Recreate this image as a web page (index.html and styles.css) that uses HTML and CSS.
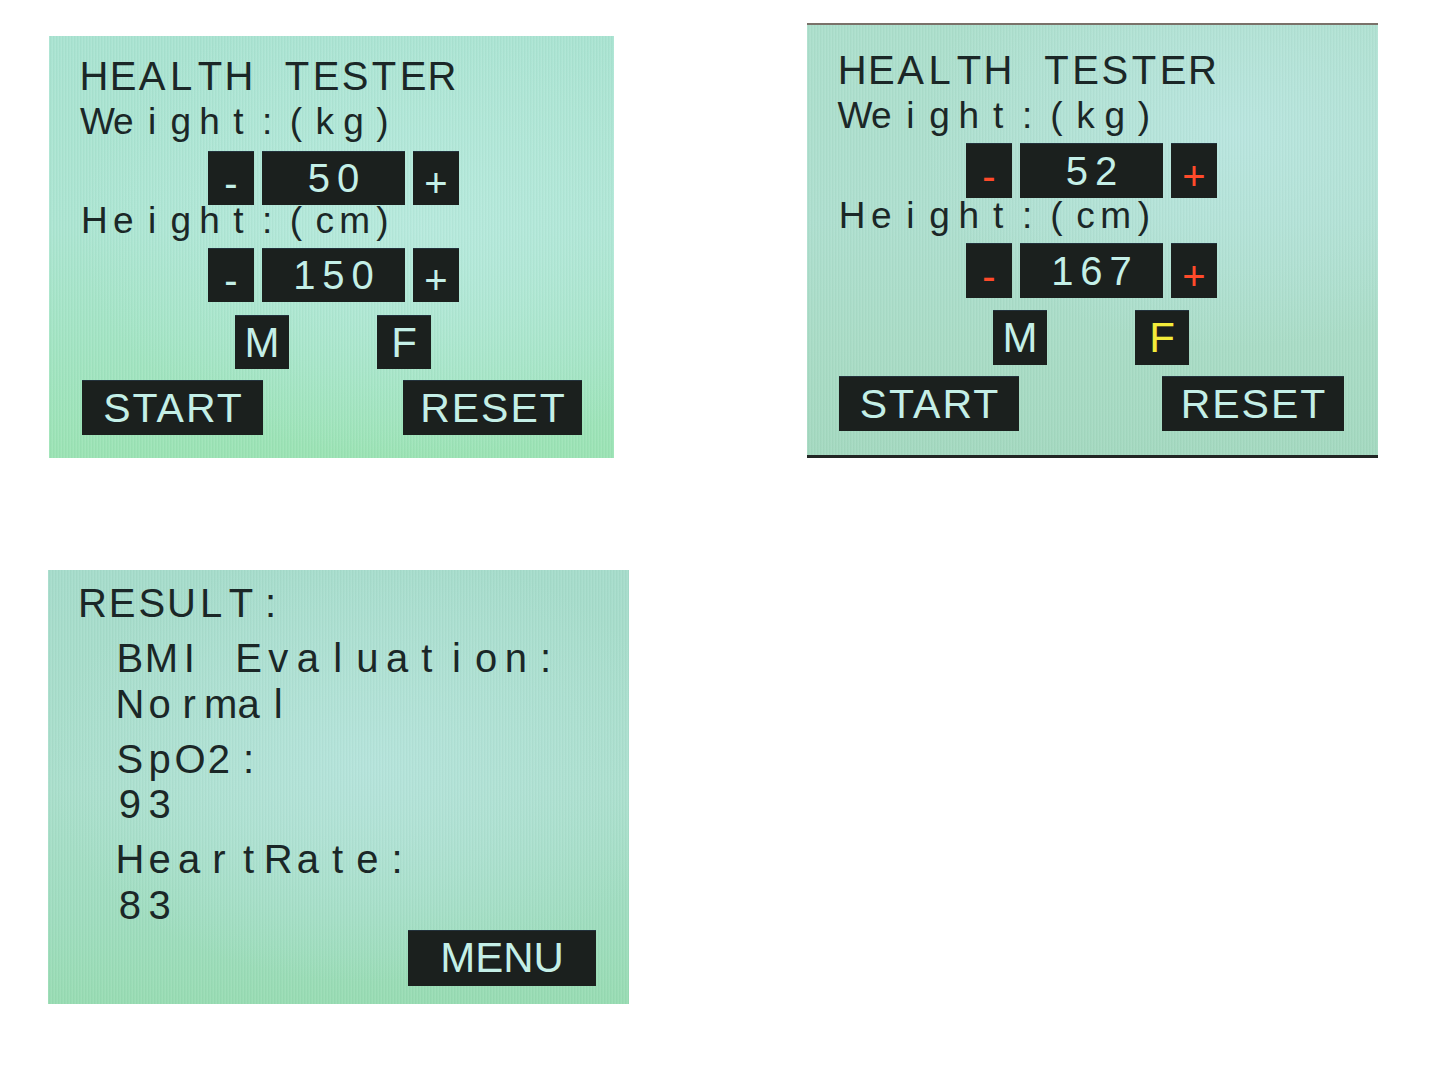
FILE: index.html
```html
<!DOCTYPE html>
<html lang="en">
<head>
<meta charset="utf-8">
<title>Health Tester</title>
<link rel="stylesheet" href="styles.css">
</head>
<body>
<div class="page">
  <div class="top-row">
    <section class="screen s1">
      <div class="line title"><span>H</span><span>E</span><span>A</span><span>L</span><span>T</span><span>H</span><span>&nbsp;</span><span>T</span><span>E</span><span>S</span><span>T</span><span>E</span><span>R</span></div>
      <div class="line label weight"><span>W</span><span>e</span><span>i</span><span>g</span><span>h</span><span>t</span><span>:</span><span>(</span><span>k</span><span>g</span><span>)</span></div>
      <div class="stepper row-w">
        <div class="key pm minus">-</div>
        <div class="key value">50</div>
        <div class="key pm plus">+</div>
      </div>
      <div class="line label height"><span>H</span><span>e</span><span>i</span><span>g</span><span>h</span><span>t</span><span>:</span><span>(</span><span>c</span><span>m</span><span>)</span></div>
      <div class="stepper row-h">
        <div class="key pm minus">-</div>
        <div class="key value">150</div>
        <div class="key pm plus">+</div>
      </div>
      <div class="gender">
        <div class="key gkey">M</div>
        <div class="key gkey">F</div>
      </div>
      <div class="actions">
        <div class="key act start">START</div>
        <div class="key act reset">RESET</div>
      </div>
    </section>

    <section class="screen s2">
      <div class="line title"><span>H</span><span>E</span><span>A</span><span>L</span><span>T</span><span>H</span><span>&nbsp;</span><span>T</span><span>E</span><span>S</span><span>T</span><span>E</span><span>R</span></div>
      <div class="line label weight"><span>W</span><span>e</span><span>i</span><span>g</span><span>h</span><span>t</span><span>:</span><span>(</span><span>k</span><span>g</span><span>)</span></div>
      <div class="stepper row-w">
        <div class="key pm minus">-</div>
        <div class="key value">52</div>
        <div class="key pm plus">+</div>
      </div>
      <div class="line label height"><span>H</span><span>e</span><span>i</span><span>g</span><span>h</span><span>t</span><span>:</span><span>(</span><span>c</span><span>m</span><span>)</span></div>
      <div class="stepper row-h">
        <div class="key pm minus">-</div>
        <div class="key value">167</div>
        <div class="key pm plus">+</div>
      </div>
      <div class="gender">
        <div class="key gkey">M</div>
        <div class="key gkey selected">F</div>
      </div>
      <div class="actions">
        <div class="key act start">START</div>
        <div class="key act reset">RESET</div>
      </div>
    </section>
  </div>

  <section class="screen s3">
    <div class="line rline result"><span>R</span><span>E</span><span>S</span><span>U</span><span>L</span><span>T</span><span>:</span></div>
    <div class="group">
      <div class="line rline indent bmi"><span>B</span><span>M</span><span>I</span><span>&nbsp;</span><span>E</span><span>v</span><span>a</span><span>l</span><span>u</span><span>a</span><span>t</span><span>i</span><span>o</span><span>n</span><span>:</span></div>
      <div class="line rline indent bmi val"><span>N</span><span>o</span><span>r</span><span>m</span><span>a</span><span>l</span></div>
    </div>
    <div class="group">
      <div class="line rline indent"><span>S</span><span>p</span><span>O</span><span>2</span><span>:</span></div>
      <div class="line rline indent val"><span>9</span><span>3</span></div>
    </div>
    <div class="group">
      <div class="line rline indent"><span>H</span><span>e</span><span>a</span><span>r</span><span>t</span><span>R</span><span>a</span><span>t</span><span>e</span><span>:</span></div>
      <div class="line rline indent val"><span>8</span><span>3</span></div>
    </div>
    <div class="key menu">MENU</div>
  </section>
</div>
</body>
</html>
```

FILE: styles.css
```css
html, body {
  margin: 0;
  padding: 0;
  background: #ffffff;
}

body {
  font-family: "Liberation Sans", Arial, sans-serif;
  color: #1b2727;
}

.page {
  width: 1430px;
  height: 1070px;
}

.top-row {
  display: flex;
  align-items: flex-start;
}

.screen {
  box-sizing: border-box;
  display: flex;
  flex-direction: column;
  align-items: flex-start;
}

/* ---------- screen backgrounds ---------- */
.s1 {
  margin: 36px 0 0 49px;
  width: 565px;
  height: 422px;
  padding-top: 20px;
  background:
    repeating-linear-gradient(90deg, rgba(255,255,255,0.07) 0 1px, rgba(0,0,0,0.025) 1px 2px, rgba(0,0,0,0) 2px 3px),
    radial-gradient(ellipse 60% 55% at 65% 45%, rgba(184,234,222,0.9) 0%, rgba(184,234,222,0) 100%),
    linear-gradient(180deg, #a9e3d1 0%, #ace5d2 45%, #a2e4c2 75%, #9be3b4 100%);
}

.s2 {
  margin: 23px 0 0 193px;
  width: 571px;
  height: 435px;
  padding-top: 25px;
  border-top: 2px solid #7a726a;
  border-bottom: 3px solid #222624;
  background:
    repeating-linear-gradient(90deg, rgba(255,255,255,0.06) 0 1px, rgba(0,0,0,0.025) 1px 2px, rgba(0,0,0,0) 2px 3px),
    radial-gradient(ellipse 55% 50% at 75% 25%, rgba(186,230,224,0.95) 0%, rgba(186,230,224,0) 100%),
    linear-gradient(180deg, #acdfcc 0%, #aedfcf 45%, #a9dcc6 75%, #a4d9c0 100%);
}

.s3 {
  margin: 112px 0 0 48px;
  width: 581px;
  height: 434px;
  padding-top: 13px;
  background:
    repeating-linear-gradient(90deg, rgba(255,255,255,0.06) 0 1px, rgba(0,0,0,0.025) 1px 2px, rgba(0,0,0,0) 2px 3px),
    radial-gradient(ellipse 55% 50% at 55% 45%, rgba(182,228,220,0.95) 0%, rgba(182,228,220,0) 100%),
    linear-gradient(180deg, #a6dccb 0%, #aadfcc 50%, #a0ddc0 78%, #98dcb3 100%);
}

/* ---------- character-cell text lines ---------- */
.line {
  display: flex;
}

.line > span {
  flex: 0 0 auto;
  width: var(--pitch);
  text-align: center;
  white-space: pre;
}

.title {
  font-size: 40px;
  line-height: 40px;
  --pitch: 29px;
  padding-left: 30.5px;
}

.label {
  font-size: 37px;
  line-height: 37px;
  --pitch: 28.8px;
  padding-left: 31px;
}

.s2 .title,
.s2 .label {
  --pitch: 29.2px;
  padding-left: 30.5px;
}

.weight { margin-top: 7px; }
.s1 .row-w { margin-top: 11px; }
.s1 .height { margin-top: -3px; }
.s2 .row-w { margin-top: 9px; }
.s2 .height { margin-top: -1px; }
.row-h { margin-top: 9px; }

/* ---------- keys ---------- */
.key {
  background: #1b201e;
  color: #c4efe7;
  display: flex;
  align-items: center;
  justify-content: center;
  box-sizing: border-box;
  border-top: 1px solid #23323c;
}

.stepper {
  display: flex;
  gap: 8px;
  margin-left: 159px;
  height: 54px;
}

.s2 .stepper { height: 55px; }

.pm {
  width: 46px;
  font-size: 40px;
  padding-top: 10px;
}

.value {
  width: 143px;
  font-size: 40px;
  letter-spacing: 7px;
  text-indent: 7px;
}

.s2 .pm {
  color: #ff4a2a;
}

.gender {
  display: flex;
  gap: 88px;
  margin-left: 186px;
  margin-top: 13px;
}

.s2 .gender { margin-top: 12px; }

.gkey {
  width: 54px;
  height: 54px;
  font-size: 42px;
}

.s2 .gkey { height: 55px; }

.gkey.selected {
  color: #f3ec3a;
}

.actions {
  display: flex;
  gap: 140px;
  margin-left: 33px;
  margin-top: 11px;
}

.s2 .actions {
  gap: 143px;
  margin-left: 32px;
}

.act {
  height: 55px;
  font-size: 41px;
  letter-spacing: 2px;
  text-indent: 2px;
}

.start { width: 181px; }
.reset { width: 179px; }
.s2 .start { width: 180px; }
.s2 .reset { width: 182px; }

/* ---------- result screen ---------- */
.rline {
  font-size: 40px;
  line-height: 40px;
  --pitch: 29.7px;
}

.result {
  padding-left: 29.6px;
}

.indent {
  padding-left: 67px;
}

.group {
  display: flex;
  flex-direction: column;
  gap: 5.5px;
  margin-top: 15px;
}

.menu {
  margin-top: 5px;
  margin-left: 360px;
  width: 188px;
  height: 56px;
  font-size: 42px;
}
```
